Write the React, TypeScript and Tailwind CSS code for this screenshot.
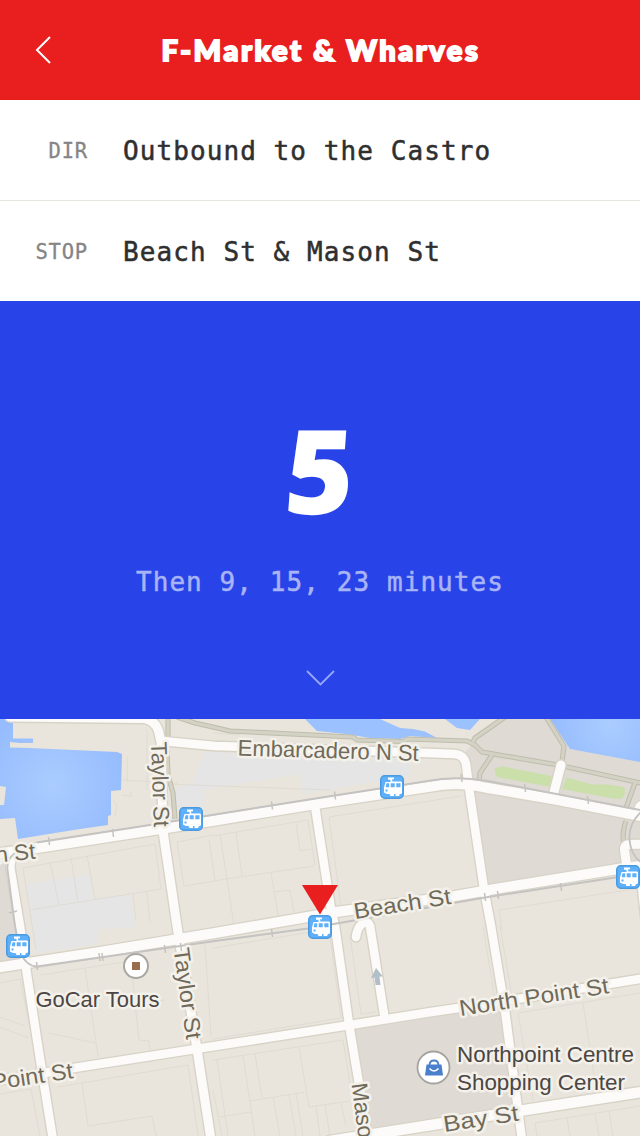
const LABEL = "#6f6a5a";
const INK = "#4b4644";

type Pt = { x: number; y: number };

const roads: { d: string; w: number }[] = [
  { d: "M10 717 L144 718.5 Q155 720 158.500 731 L161 742 L163 831 L177 926 L197 1049 L211 1140", w: 9 },
  { d: "M162 741 L215 746 L428 753 L455 754 Q464 755 466 764 L469 788 L484 889 L491 926 L505 1010 L522 1140", w: 8.5 },
  { d: "M315 806 L331 909 L335 926 L349 1024 L360 1090 L368 1140", w: 8.5 },
  { d: "M14 856 Q9 861 11 872 L20 926 L26 968 L40 1059 L53 1140", w: 8.5 },
  { d: "M-5 1081 L77 1067.500 L215 1046 L350 1025 L428 1012.500 L505 1001 L645 978", w: 8.5 },
  { d: "M384 1014 L370 926 Q368 920 362 924 Q357 928 356 937", w: 8.5 },
  { d: "M561 765 L553 796", w: 9 },
  { d: "M645 844 L629 844.500 Q624 845 624.500 850 L627 868", w: 9 },
  { d: "M640 812 Q637 806 645 804", w: 9 },
  { d: "M641 880 L646 926", w: 8 },
  { d: "M-5 854 L37 848 L160 829 L215 820.500 L316 804 L428 787 Q458 781 485 787.500 L558 800 L645 817", w: 10 },
  { d: "M-5 968 L100 952 L215 933 L296 919 L336 912 L455 896 L498 888.500 L618 869 L645 865", w: 10 },
  { d: "M330 1141 L425 1126 L522 1110.500 L645 1091.500", w: 10.5 },
];

const paths = [
  "M177 717 L195 723 L215 727.500 L230 731 L353 737 L357 740 L403 741.500 L408 739 L467 741 L475 745 L482 752 L558 765 L645 784",
  "M473 742 L475 738 L505 717",
  "M546 717 L564 746 L562 762",
  "M492 755 L480 773 L479 781",
  "M635 783 L626 808",
  "M626 821 Q622 832 623.500 843",
  "M168 717 L168 738",
  "M167 750 L168 775 L173 793 L175 819",
];

const rails = [
  "M37 842.500 L150 825 L215 814.500 L335 795.500 L428 781 Q455 775.500 488 781 L588 800 L645 811",
  "M15 853 Q6 860 7.500 870 L15 926 L20 952 Q26 966 37 966.500 L215 941 L308 928.500 L425 908 L485 897.500 L612 878 L645 873",
  "M642 811 Q628 824 629.500 840 Q631 856 642 863",
];

const ticks: Pt[] = [
  { x: 49, y: 841 }, { x: 113, y: 833 }, { x: 272, y: 805.5 }, { x: 335, y: 795.5 },
  { x: 461.5, y: 778 }, { x: 525, y: 788 }, { x: 588, y: 800 }, { x: 37, y: 966 },
  { x: 99.5, y: 957 }, { x: 102.5, y: 957 }, { x: 165, y: 949 }, { x: 181, y: 947 },
  { x: 272, y: 933 }, { x: 485, y: 897 }, { x: 498, y: 895 }, { x: 561, y: 887 },
];

const parcels = [
  "M23 868 L155 844 L161 889 L30 910 M50 862 L59 905 M71 858 L78 902 M87 855 L95 899 M23 868 L36 950 M133 893 L136 921 M147 892 L150 922",
  "M177 842 L213 835 M177 842 L184 886 L215 881 M209 840 L215 880",
  "M147 729 L147 790 M122 780 L178 783 M127 757 L127 781 M122 795 L131 796 L131 791 M113 800 L117 805 L115 816",
  "M213 836 L308 820 L315 865 M220 835 L227 879 L234 926 M236 832 L242 876 M213 881 L314 866 M271 873 L278 915 M275 892 L290 890 L294 912 M296 823 L300 851 L311 849",
  "M329 817 L461 796 M329 817 L341 907 M165 784 L330 790 M213 733 L240 735",
  "M483 800 L640 826 M483 800 L496 880 M499 910 L640 888 M499 910 L502 930",
  "M41 975 L130 961 M0 983 L20 979 L35 1051 M85 968 L98 1056 M49 1033 L95 1043 M0 1017 L25 1026 M0 1027 L29 1038 M131 965 L139 1040 L149 1041 L150 1050 M137 1004 L165 1000",
  "M213 948 L329 929 M340 935 L329 930 L341 1018 L213 1039 M350 935 L361 1014 L376 1012",
  "M0 1094 L31 1089 L40 1136 M58 1087 L188 1065 L198 1136 M82 1083 L88 1126 L152 1116 L156 1136 M213 1060 L343 1040 L352 1095 M243 1056 L255 1136 M255 1054 L262 1098 M299 1047 L309 1107 L350 1101 M250 1101 L305 1092 M220 1117 L251 1112 M273 1097 L280 1136 M289 1094 L296 1136 M296 1093 L303 1136 M213 1090 L222 1136 M316 1106 L320 1136 M325 1105 L330 1136 M341 1103 L346 1126",
  "M500 926 L512 996 M483 926 L495 1000 M518 1013 L640 993 M518 1013 L533 1100 M583 1003 L597 1095 M364 1036 L500 1014 M364 1036 L378 1124 M535 1123 L640 1106 M535 1123 L537 1136 M567 1118 L570 1136 M595 1114 L599 1136 M609 1111 L613 1136",
  "M205 945 L211 1036 M217 1060 L228 1136 M595 754 L605 772",
];

function Tram({ x, y }: Pt) {
  return (
    <g transform={`translate(${x} ${y})`}>
      <rect x="0.75" y="0.75" width="22.500" height="22.500" rx="4" fill="#5fb0fb" stroke="#4b9ae0" strokeWidth="1.500" />
      <path d="M8 2.500h6v1.700h-1.800v2.300h8.800l1 1v10.500l-1 1h-14l-3-1.500v-5l1.500-5.500h5v-2.300h-2.500z" fill="#fff" />
      <path d="M6.500 8.300h2.700v4h-3.500zM10.700 8.300h4v4h-4zM16.300 8.300h4.200v4h-4.200zM5.500 14.500h2v2h-2z" fill="#5fb0fb" />
      <path d="M9.500 19h4.500v2h-3.500zM15.500 19h4.500l-1 2h-3.500z" fill="#fff" />
    </g>
  );
}

type LabelProps = { x: number; y: number; text: string; r?: number; len?: number; end?: boolean; color?: string };

function Label({ x, y, text, r = 0, len, end, color = LABEL }: LabelProps) {
  return (
    <text
      x={x}
      y={y}
      transform={`rotate(${r} ${x} ${y})`}
      textLength={len}
      textAnchor={end ? "end" : "start"}
      lengthAdjust="spacingAndGlyphs"
      fill={color}
      stroke="#f4f1eb"
      strokeWidth="5"
      strokeLinejoin="round"
      paintOrder="stroke"
      className="font-['Liberation_Sans',sans-serif] text-[22.500px]"
    >
      {text}
    </text>
  );
}

function StreetMap() {
  return (
    <svg viewBox="0 719 640 417" className="block h-[417px] w-full bg-[#e9e5dc]">
      <defs>
        <radialGradient id="bay" gradientUnits="userSpaceOnUse" cx="52" cy="785" r="75">
          <stop offset="0" stopColor="#aaccff" />
          <stop offset="1" stopColor="#96bcfd" />
        </radialGradient>
        <radialGradient id="pier" gradientUnits="userSpaceOnUse" cx="610" cy="725" r="60">
          <stop offset="0" stopColor="#aaccff" />
          <stop offset="1" stopColor="#96bcfd" />
        </radialGradient>
      </defs>
      <g fill="#e5e5e5">
        <path d="M27 884L90 874L93 899L131 895L134 921L135 927L97 929L98 944L36 953Z" />
        <path d="M204 752L193 783L174 789L177 811L205 808L204 790L213 788L300 774L303 794L411 775L410 758Z" />
      </g>
      <g fill="#dfdad4">
        <path d="M503 719H550L570 749L640 762V812L558 797L485 785L469 782L465 752L475 742Z" />
        <path d="M473 790L558 802L640 818V864L487 890Z" />
        <path d="M354 1028L505 1004L520 1108L369 1130Z" />
        <path d="M0 859L8 859L20 960L0 964Z" />
      </g>
      <path fill="#cadfaa" d="M495 768L503 766.500L551.500 776L551 787L497 777Q494 773 495 768ZM566.500 777.500L592 784.500H606L624 787Q627 794 621 799L613 798.500L562 789Z" />
      <path fill="url(#bay)" d="M0 719H13V738.500H33V743H20L10 742V747.500L30 748L117 752L122 754L121 790L111 791V815L108 816V825L80 829L18 839L15 818L0 819V805H4L6 787L0 786Z" />
      <path fill="#9bc1fe" d="M305 719L317 731L346 734L370 738L400 739L410 736L437 738L425 731.500L413 729L400 728L380 719ZM445 719L457 728L470 730L480 719Z" />
      <path fill="url(#pier)" d="M550 719L570 749L602 755L640 762V719Z" />
      <g fill="none" stroke="#dedad2" strokeWidth="0.900">
        {parcels.map((d) => <path key={d} d={d} />)}
      </g>
      <g fill="none" strokeLinejoin="round">
        {paths.map((d) => <path key={d} d={d} stroke="#bfbdac" strokeWidth="5.200" />)}
        {paths.map((d) => <path key={d} d={d} stroke="#d3d2c5" strokeWidth="3.200" />)}
      </g>
      <g fill="none" strokeLinejoin="round" strokeLinecap="round">
        {roads.map(({ d, w }) => <path key={d} d={d} stroke="#d8d3c7" strokeWidth={w + 2.8} />)}
        {roads.map(({ d, w }) => <path key={d} d={d} stroke="#fcfbf9" strokeWidth={w} />)}
      </g>
      <g fill="none" stroke="#c4c3c1">
        {rails.map((d) => <path key={d} d={d} strokeWidth="1.900" />)}
        {ticks.map((t) => <path key={`${t.x}-${t.y}`} d={`M${t.x - 0.5} ${t.y - 4}L${t.x + 0.5} ${t.y + 4}`} strokeWidth="1.500" />)}
        <path d="M9 913L17 911" strokeWidth="1.500" />
      </g>
      <path fill="#b3bfc8" d="M376 968L383 976.500H379.500L380.500 985H375.500L374.500 977.500L371 978Z" />
      <Label x={237.500} y={755.5} r={1.700} len={181} text="Embarcadero N St" />
      <Label x={151} y={742} r={88} len={85} text="Taylor St" />
      <Label x={173.500} y={949} r={82} len={92} text="Taylor St" />
      <Label x={36} y={858.500} r={-6} end text="n St" />
      <Label x={355} y={919} r={-9} len={98} text="Beach St" />
      <Label x={460.500} y={1016} r={-8.800} len={151} text="North Point St" />
      <Label x={74} y={1078} r={-8.500} len={82} end text="Point St" />
      <Label x={444.500} y={1132} r={-8.800} len={76} text="Bay St" />
      <Label x={351.500} y={1084} r={82.500} text="Mason St" />
      <circle cx="136" cy="966" r="12" fill="#fff" stroke="#aaa7a2" strokeWidth="2" />
      <rect x="132" y="962" width="8" height="8" fill="#986e4e" />
      <Label x={35.500} y={1007} len={124} color={INK} text="GoCar Tours" />
      <circle cx="433.500" cy="1067.500" r="16" fill="#fff" stroke="#a5a29f" strokeWidth="1.800" />
      <path fill="#4a7fcb" d="M426.500 1064.500H441.500L443 1075.500H425Z" />
      <path fill="none" stroke="#4a7fcb" strokeWidth="1.800" d="M429.500 1065.500Q429.500 1060.500 434 1060.500T438.500 1065.500" />
      <path fill="none" stroke="#fff" strokeWidth="1.600" d="M429.500 1068.500Q434 1073.500 438.500 1068.500" />
      <Label x={457} y={1062} len={177} color={INK} text="Northpoint Centre" />
      <Label x={457} y={1090} len={168} color={INK} text="Shopping Center" />
      <Tram x={179} y={807} />
      <Tram x={380} y={775} />
      <Tram x={308} y={915} />
      <Tram x={616} y={865} />
      <Tram x={6} y={934} />
      <path fill="#e91e1f" d="M302 885H338L320 914.500Z" />
    </svg>
  );
}

function InfoRow({ label, value }: { label: string; value: string }) {
  return (
    <div className="flex h-[100px] items-center gap-[35px] pt-0.5 font-['DejaVu_Sans_Mono',monospace]">
      <span className="w-[88px] text-right text-[20.500px] tracking-[0.800px] text-[#858585] [-webkit-text-stroke:0.3px_#858585]">{label}</span>
      <span className="text-[26px] tracking-[1.080px] text-[#2f2f2f] [-webkit-text-stroke:0.500px_#2f2f2f]">{value}</span>
    </div>
  );
}

export default function App() {
  return (
    <main className="flex h-[1136px] w-[640px] flex-col overflow-hidden bg-white">
      <header className="grid h-[100px] shrink-0 grid-cols-[88px_1fr_88px] items-center bg-[#e91e1f] text-white">
        <svg viewBox="0 0 16 28" className="ml-[35px] h-7 w-4" fill="none" stroke="currentColor" strokeWidth="2">
          <path d="M15 1L2 14L15 27" />
        </svg>
        <h1 className="text-center font-['Lato',sans-serif] text-[29px] font-black tracking-[2.600px] whitespace-nowrap indent-[2px] [-webkit-text-stroke:2px_white]">F-Market &amp; Wharves</h1>
      </header>
      <section className="shrink-0">
        <InfoRow label="DIR" value="Outbound to the Castro" />
        <div className="h-px bg-[#e8e6e0]" />
        <InfoRow label="STOP" value="Beach St & Mason St" />
      </section>
      <section className="flex h-[418px] shrink-0 flex-col items-center bg-[#2844e8] text-white">
        <div className="mt-[108px] -skew-x-4 font-['Open_Sans',sans-serif] text-[117px] leading-[120px] font-extrabold">5</div>
        <p className="mt-[33px] font-['DejaVu_Sans_Mono',monospace] text-[26px] leading-[40px] tracking-[1.080px] text-[#a9b4f6] [-webkit-text-stroke:0.500px_#a9b4f6]">Then 9, 15, 23 minutes</p>
        <svg viewBox="0 0 30 18" className="mt-[67px] h-[18px] w-[30px]" fill="none" stroke="#98a6f5" strokeWidth="1.800">
          <path d="M2 2L15.500 15.500L29 2" />
        </svg>
      </section>
      <StreetMap />
    </main>
  );
}
